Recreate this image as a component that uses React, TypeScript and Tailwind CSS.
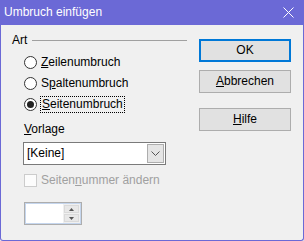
import React from "react";

const FONT = { fontFamily: '"Liberation Sans", Arial, sans-serif' };

function Radio({ checked }: { checked?: boolean }) {
  return (
    <svg width="13" height="13" viewBox="0 0 13 13" className="shrink-0">
      <circle cx="6.5" cy="6.5" r="6" fill="#fff" stroke="#333" strokeWidth="1" />
      {checked && <circle cx="6.5" cy="6.5" r="3.5" fill="#222" />}
    </svg>
  );
}

function Btn({ children, primary }: { children: React.ReactNode; primary?: boolean }) {
  return (
    <div
      className={
        "flex h-[23px] w-[92px] items-center justify-center bg-[#e1e1e1] text-[12px] text-black " +
        (primary ? "border-2 border-[#0078d7]" : "border border-[#adadad]")
      }
    >
      {children}
    </div>
  );
}

export default function App() {
  const options = [
    { label: <><u>Z</u>eilenumbruch</>, checked: false },
    { label: <>S<u>p</u>altenumbruch</>, checked: false },
    { label: <><u>S</u>eitenumbruch</>, checked: true },
  ];

  return (
    <div className="flex h-[241px] w-[304px] flex-col bg-[#f0f0f0] text-[12px] leading-[15px] text-black" style={FONT}>
      {/* title bar */}
      <div className="flex h-[25px] shrink-0 items-center justify-between bg-[#6b69d6] pl-[4px] pr-[10px] text-white">
        <span>Umbruch einfügen</span>
        <svg width="11" height="11" viewBox="0 0 11 11">
          <path d="M0.5 0.5 L10.5 10.5 M10.5 0.5 L0.5 10.5" stroke="#fff" strokeWidth="1" />
        </svg>
      </div>

      <div className="flex flex-1 rounded-b-[3px] border-x border-b border-[#6b69d6]">
        {/* left column */}
        <div className="flex w-[186px] flex-col pl-[11px] pt-[8px]">
          <div className="flex h-[15px] items-center">
            <span>Art</span>
            <div className="ml-[5px] h-px flex-1 bg-[#a0a0a0]" />
          </div>

          <div className="mt-[4px] flex flex-col pl-[12px]">
            {options.map((o, i) => (
              <div key={i} className="flex h-[21px] items-center">
                <Radio checked={o.checked} />
                {o.checked ? (
                  <span className="ml-[3px] border border-dotted border-black px-px">{o.label}</span>
                ) : (
                  <span className="ml-[4px]">{o.label}</span>
                )}
              </div>
            ))}
          </div>

          <div className="mt-[7px] h-[15px] pl-[12px]">
            <u>V</u>orlage
          </div>

          <div className="ml-[11px] mt-[5px] flex h-[23px] w-[143px] items-stretch border border-[#7a7a7a] bg-white p-px">
            <span className="flex flex-1 items-center pl-[2px]">[Keine]</span>
            <div className="flex w-[17px] items-center justify-center border border-[#adadad] bg-[#e5e5e5]">
              <svg width="9" height="5" viewBox="0 0 9 5">
                <path d="M0.5 0.5 L4.5 4.5 L8.5 0.5" fill="none" stroke="#555" strokeWidth="1" />
              </svg>
            </div>
          </div>

          <div className="mt-[8px] flex h-[15px] items-center pl-[12px] text-[#a0a0a0]">
            <div className="h-[13px] w-[13px] shrink-0 border border-[#cccccc] bg-[#fcfcfc]" />
            <span className="ml-[4px]">
              Seiten<u>n</u>ummer ändern
            </span>
          </div>

          <div className="ml-[12px] mt-[14px] flex h-[23px] w-[58px] border border-[#adadad]">
            <div className="flex flex-1 border border-[#c5d6ee] bg-white">
              <div className="flex-1" />
              <div className="flex w-[17px] flex-col gap-px bg-[#f0f0f0] p-px">
                <div className="flex flex-1 items-center justify-center border border-[#dadada] bg-[#e8e8e8]">
                  <svg width="5" height="3" viewBox="0 0 5 3">
                    <path d="M0 3 L2.5 0 L5 3 Z" fill="#555" />
                  </svg>
                </div>
                <div className="flex flex-1 items-center justify-center border border-[#dadada] bg-[#e8e8e8]">
                  <svg width="5" height="3" viewBox="0 0 5 3">
                    <path d="M0 0 L2.5 3 L5 0 Z" fill="#555" />
                  </svg>
                </div>
              </div>
            </div>
          </div>
        </div>

        {/* right column */}
        <div className="ml-[12px] flex w-[92px] flex-col pt-[14px]">
          <Btn primary>OK</Btn>
          <div className="mt-[8px]">
            <Btn>
              <span><u>A</u>bbrechen</span>
            </Btn>
          </div>
          <div className="mt-[15px]">
            <Btn>
              <span><u>H</u>ilfe</span>
            </Btn>
          </div>
        </div>
      </div>
    </div>
  );
}
